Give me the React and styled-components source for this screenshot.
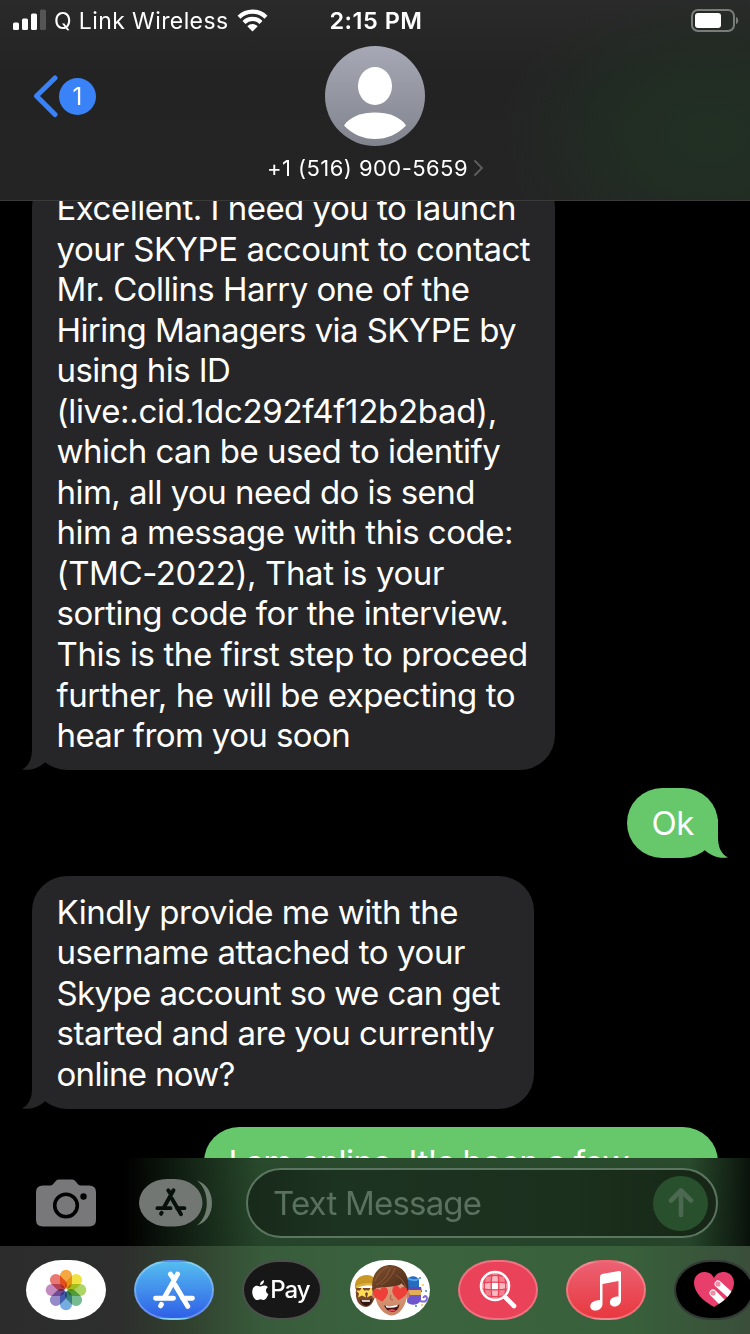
import React from "react";
import styled, { createGlobalStyle } from "styled-components";

const GlobalStyle = createGlobalStyle`
  * { box-sizing: border-box; }
  html, body { margin: 0; padding: 0; background: #000; }
  body { font-family: Inter, "Liberation Sans", sans-serif; color: #fff; overflow: hidden; }
  svg { display: block; flex: none; }
`;

const Screen = styled.main`
  display: flex;
  flex-direction: column;
  width: 750px;
  height: 1334px;
  background: #000;
  overflow: hidden;
`;

const Header = styled.header`
  flex: none;
  height: 201px;
  border-bottom: 1px solid #3a3a3b;
  background:
    radial-gradient(ellipse 210px 150px at 710px 135px, #223024 0%, rgba(33, 46, 35, 0.8) 45%, rgba(34, 36, 34, 0) 100%),
    linear-gradient(#2a2a2a 0, #232323 75px, #242424 100%);
`;

const StatusBar = styled.div`
  display: grid;
  grid-template-columns: 1fr auto 1fr;
  align-items: center;
  height: 40px;
  padding: 0 11px 0 13px;
`;

const Carrier = styled.div`
  display: flex;
  align-items: center;
  font-size: 23px;
  letter-spacing: 0.4px;
  white-space: nowrap;
  span { margin: 1px 8px 0 8px; }
`;

const Clock = styled.time`
  font-size: 23.5px;
  font-weight: 600;
  letter-spacing: 0.5px;
  padding-top: 1px;
`;

const BatterySlot = styled.div`
  justify-self: end;
`;

const ContactBar = styled.div`
  display: grid;
  grid-template-columns: 1fr auto 1fr;
  padding: 6px 33px 0;
`;

const BackButton = styled.div`
  display: flex;
  align-items: center;
  align-self: start;
  gap: 1px;
  height: 100px;
`;

const UnreadBadge = styled.span`
  display: grid;
  place-items: center;
  width: 37px;
  height: 37px;
  border-radius: 50%;
  background: #3a82f7;
  font-size: 24px;
`;

const Contact = styled.div`
  display: flex;
  flex-direction: column;
  align-items: center;
`;

const PhoneNumber = styled.div`
  display: flex;
  align-items: center;
  gap: 6px;
  height: 30px;
  margin-top: 7px;
  font-size: 22px;
  letter-spacing: 0.45px;
  white-space: nowrap;
`;

const Thread = styled.section`
  display: flex;
  flex-direction: column;
  flex: none;
  height: 957px;
  padding: 0 32px;
  overflow: hidden;
`;

const Bubble = styled.article`
  position: relative;
  flex: none;
  align-self: ${(p) => (p.$sent ? "flex-end" : "flex-start")};
  width: ${(p) => p.$width}px;
  margin-top: ${(p) => p.$gap}px;
  padding: 15.4px 0 14px 24.5px;
  border-radius: 35px;
  background: ${(p) => (p.$sent ? "#67c76b" : "#262628")};
`;

const Line = styled.div`
  height: 40.56px;
  line-height: 40.56px;
  font-size: 33px;
  letter-spacing: ${(p) => p.$track}px;
  white-space: nowrap;
`;

const TailShape = styled.svg`
  position: absolute;
  bottom: 0;
  ${(p) => (p.$sent ? "right: -10px; transform: scaleX(-1);" : "left: -10px;")}
`;

const Composer = styled.section`
  display: flex;
  align-items: center;
  flex: none;
  height: 88px;
  padding: 0 32px 0 36px;
  background:
    linear-gradient(90deg, #000 0, #000 125px, rgba(0, 0, 0, 0) 260px, rgba(0, 0, 0, 0) 690px, rgba(0, 0, 0, 0.75) 750px),
    linear-gradient(#294a2c, #254429);
`;

const ComposerIcons = styled.div`
  display: flex;
  gap: 43px;
  width: 210px;
  margin-top: 2px;
`;

const Field = styled.div`
  display: flex;
  align-items: center;
  justify-content: space-between;
  flex: 1;
  height: 70px;
  margin-top: 2px;
  padding: 0 8px 0 25px;
  border: 2px solid #5b7560;
  border-radius: 35px;
  background: linear-gradient(90deg, #182a1a, #1d3321 20%, #1b301d 70%, #172616);
  color: #5b715f;
  font-size: 33px;
  letter-spacing: -0.8px;
`;

const SendButton = styled.div`
  display: grid;
  place-items: center;
  width: 55px;
  height: 55px;
  border-radius: 50%;
  background: #28502c;
`;

const Drawer = styled.nav`
  display: flex;
  align-items: center;
  gap: 28px;
  flex: none;
  height: 88px;
  padding-left: 26px;
  background: linear-gradient(90deg, #2c2c2d 0, #2d2e2d 120px, #31422f 190px, #385c3b 265px, #3b643e 420px, #38603a 630px, #3a4e3a 750px);
`;

const AppTile = styled.div`
  display: grid;
  place-items: center;
  flex: none;
  width: 80px;
  height: 60px;
  border-radius: 36px / 30px;
  border: ${(p) => p.$rim || "0"};
  background: ${(p) => p.$fill};
  overflow: hidden;
`;

const PayMark = styled.div`
  display: flex;
  align-items: center;
  gap: 1px;
  font-size: 24px;
  font-weight: 500;
  letter-spacing: -1px;
  line-height: 30px;
  margin-left: -2px;
`;

const Signal = () => (
  <svg width="33" height="22" viewBox="0 0 33 22">
    <g fill="#fff">
      <rect x="0" y="13.5" width="6" height="7.5" rx="1.5" />
      <rect x="9" y="9.5" width="6" height="11.5" rx="1.5" />
      <rect x="18" y="4.5" width="6" height="16.5" rx="1.5" />
      <rect x="27" y="0.5" width="6" height="20.5" rx="1.5" fill="#555556" />
    </g>
  </svg>
);

const Wifi = () => (
  <svg width="31" height="23" viewBox="0 0 31 23">
    <g fill="none" stroke="#fff" strokeWidth="4.2">
      <path d="M2 8.2A19.2 19.2 0 0 1 29 8.2" />
      <path d="M7 13.4A12 12 0 0 1 24 13.4" />
    </g>
    <path fill="#fff" d="M15.5 22.5 10.3 17.2A7.4 7.4 0 0 1 20.7 17.2Z" />
  </svg>
);

const Battery = () => (
  <svg width="48" height="23" viewBox="0 0 48 23">
    <rect x="1" y="1" width="42" height="21" rx="6" fill="none" stroke="#7a7c7a" strokeWidth="2" />
    <rect x="4" y="4" width="26" height="15" rx="3" fill="#fff" />
    <path d="M45 8C48 9 48 14 45 15Z" fill="#7a7c7a" />
  </svg>
);

const BackChevron = () => (
  <svg width="25" height="43" viewBox="0 0 25 43">
    <path d="M22 3 3.5 21 22 39.5" fill="none" stroke="#3a82f7" strokeWidth="5" strokeLinecap="round" strokeLinejoin="round" />
  </svg>
);

const Avatar = () => (
  <svg width="100" height="100" viewBox="0 0 100 100">
    <defs>
      <linearGradient id="avatar" x2="0" y2="1">
        <stop stopColor="#a6a9b5" />
        <stop offset="1" stopColor="#81838d" />
      </linearGradient>
    </defs>
    <circle cx="50" cy="50" r="50" fill="url(#avatar)" />
    <ellipse cx="50" cy="40" rx="17" ry="19" fill="#fff" />
    <path d="M19 79.5C24 71 37 66.5 50 66.5S76 71 81 79.5C72 88.500 62 93 50 93S28 88.500 19 79.500Z" fill="#fff" />
  </svg>
);

const DetailChevron = () => (
  <svg width="9" height="16" viewBox="0 0 9 16">
    <path d="M1 1 8 8 1 15" fill="none" stroke="#5f5f61" strokeWidth="1.8" strokeLinecap="round" />
  </svg>
);

const Tail = ({ sent }) => (
  <TailShape $sent={sent} width="36" height="41" viewBox="0 -10 36 41">
    <path d="M10 -8V10C10 20 7 27 0 30.500C10 32 18 28 23.500 23L34 -8Z" fill={sent ? "#67c76b" : "#262628"} />
  </TailShape>
);

const Camera = () => (
  <svg width="60" height="48" viewBox="0 0 60 48">
    <path d="M7 6.500H14C16 6.500 17 5.500 18 4 20 1.500 21 .5 23 .5H36C38 .5 39 1.500 41 4 42 5.500 43 6.500 45 6.500H53Q60 6.500 60 13V41Q60 47.500 53 47.500H7Q0 47.500 0 41V13Q0 6.500 7 6.500Z" fill="#78787a" />
    <circle cx="30" cy="26.500" r="11.300" fill="none" stroke="#000" strokeWidth="3.600" />
    <circle cx="47.500" cy="17.500" r="3.200" />
  </svg>
);

const StoreStrokes = ({ color, width }) => (
  <g fill="none" stroke={color} strokeWidth={width} strokeLinecap="round" strokeLinejoin="round">
    <path d="M2.500 26.500H20M29 26.500H38.500" />
    <path d="M17 3 20 7.500M24 3 11 26" />
    <path d="M21.500 13.500 34 34.500" />
    <path d="M8.200 32.600 7.400 34" />
  </g>
);

const AppsPill = () => (
  <svg width="74" height="48" viewBox="0 0 74 48">
    <path d="M57.500 1.500C67 4 73 13 73 24S67 44 57.500 46.500C64 42 67.800 34 67.800 24S64 6 57.500 1.500Z" fill="#6f7c70" />
    <rect width="63.500" height="47.500" rx="28" ry="23.750" fill="#737774" />
    <g transform="translate(16.500 9) scale(.75 .76)"><StoreStrokes color="#07100a" width="5.200" /></g>
  </svg>
);

const SendArrow = () => (
  <svg width="26" height="30" viewBox="0 0 26 30">
    <path d="M13 27V3M3 12.500 13 2.500 23 12.500" fill="none" stroke="#4c6850" strokeWidth="4.600" strokeLinecap="round" strokeLinejoin="round" />
  </svg>
);

const PETALS = ["#f5a130", "#efe033", "#a6d259", "#6bb587", "#6aa5de", "#8a80c2", "#be80ba", "#e96c66"];

const PhotosIcon = () => (
  <svg width="42" height="42" viewBox="-21 -21 42 42">
    {PETALS.map((color, i) => (
      <rect
        key={color}
        x="-6"
        y="-20.300"
        width="12"
        height="19.300"
        rx="6"
        fill={color}
        opacity=".92"
        transform={`rotate(${i * 45})`}
        style={{ mixBlendMode: "multiply" }}
      />
    ))}
    <circle r="1.500" fill="#fff" />
  </svg>
);

const StoreIcon = () => (
  <svg width="42" height="38" viewBox="0 0 41 37">
    <StoreStrokes color="#fff" width="4.800" />
  </svg>
);

const AppleIcon = () => (
  <svg width="17" height="21" viewBox="0 0 17 21">
    <path fill="#fff" d="M12 .3C12.200 2.900 10.300 5 8.100 5 7.900 2.700 9.900.6 12 .3ZM15.800 7.200C13.200 8.800 13.400 12.700 16.400 14 15.500 16.800 13.700 19.800 11.900 20 10.500 20 10 19.200 8.500 19.200S6.400 20 5 20C2.200 19.800-.2 14.900.3 11 .6 8 2.600 5.700 5 5.700 6.500 5.700 7.500 6.500 8.500 6.500 9.600 6.500 11 5.400 12.900 5.600 14.100 5.700 15.100 6.200 15.800 7.200Z" />
  </svg>
);

const Heart = ({ x, y, s = 1, r = 0 }) => (
  <path
    transform={`translate(${x} ${y}) rotate(${r}) scale(${s})`}
    d="M0 7C-7 2-8-1-7-4-6-8-1-7 0-4 1-7 6-8 7-4 8-1 7 2 0 7Z"
    fill="#ee4038"
  />
);

const MemojiIcon = () => (
  <svg width="80" height="60" viewBox="0 0 80 60">
    <defs>
      <linearGradient id="hair" x2="1" y2="1">
        <stop stopColor="#80502f" />
        <stop offset="1" stopColor="#482817" />
      </linearGradient>
      <linearGradient id="skin" x2="0" y2="1">
        <stop stopColor="#dda080" />
        <stop offset="1" stopColor="#c98361" />
      </linearGradient>
    </defs>
    <path d="M6 28C5 40 8 46 16 47 22 46 25 41 26 28Z" fill="#76462c" />
    <path d="M5 29C4 20 9 15 17 15 23 15 27 19 26 27 20 24 11 25 5 29Z" fill="#c99726" />
    <path d="M6 27C12 24 20 23 27 26" fill="none" stroke="#dfb440" strokeWidth="2" />
    <path d="m12 27 2 3.500 4 0-3 3 1 4-4-2-4 2 1-4-3-3 4 0Z" fill="#ffdb53" />
    <path d="m21 27 2 3.500 4 0-3 3 1 4-4-2-4 2 1-4-3-3 4 0Z" fill="#ffdb53" />
    <path d="M10 40Q16 43 22 39Q21 46 16 46Q11 45 10 40Z" fill="#321511" />
    <path d="M12 41H20" stroke="#fff" strokeWidth="1.500" />
    <path d="M57 20C59 15 67 15 69 20V29H57Z" fill="#276bc1" />
    <path d="M57 18Q64 22 69 19" stroke="#55a6e7" strokeWidth="2" fill="none" />
    <path d="M55 27H71L72 32H57Z" fill="#5f45b8" />
    <path d="M58 31H71V40C68 46 60 46 57 42Z" fill="#6e55cd" />
    <path d="M58 30H71V35H60Z" fill="#e4ae58" />
    <path d="M70 41Q77 43 77 38 76 34 73 38" stroke="#8065dc" strokeWidth="2" fill="none" />
    <g fill="#3c82dd"><circle cx="70" cy="18" r="1" /><circle cx="76" cy="31" r="1" /><circle cx="66" cy="46" r="1" /></g>
    <g fill="#f0cb37"><circle cx="73" cy="25" r="1" /><circle cx="72" cy="45" r="1" /></g>
    <ellipse cx="24.500" cy="34" rx="2.500" ry="4.500" fill="#c98361" />
    <ellipse cx="57.500" cy="34" rx="2" ry="4.500" fill="#c98361" />
    <path d="M25.500 24H57V36C56 46 49 55.500 42 55.500 34 55.500 26 46 25.500 36Z" fill="url(#skin)" />
    <path d="M22.500 31C20.500 15 28 5 41 5 54 6 60 16 58 31L56 31C55.500 28 54 25 51.500 23.500 49 26 45 26 42 26.500 36 27 30 27.500 26 28L24.500 33Z" fill="url(#hair)" />
    <path d="M26 25C33 22 38 15 40 8M31 25C38 21 43 15 45 8M46 15C51 18 54 22 56 27M25 21C28 13 33 9 38 7" fill="none" stroke="#9a6540" strokeWidth=".8" />
    <path d="M34 45.500Q42 48 49.500 44.500Q48 52 42 52Q36.500 51 34 45.500Z" fill="#4a1514" />
    <path d="M36 46.500Q42 48 47.500 45.500" stroke="#fff" strokeWidth="1.600" fill="none" />
    <path d="M38 50.500Q42 48 46 50.500Q42 52.500 38 50.500Z" fill="#e4525b" />
    <path d="M41 35Q39 40 43 40" fill="none" stroke="#b66c51" strokeWidth="1.500" />
    <Heart x={31} y={34.5} s={1.03} r={-12} />
    <Heart x={49.5} y={33} s={1.03} r={8} />
  </svg>
);

const ImageSearchIcon = () => (
  <svg width="40" height="42" viewBox="0 0 40 42">
    <defs><clipPath id="globe"><circle cx="17" cy="17" r="12.500" /></clipPath></defs>
    <g clipPath="url(#globe)">
      <rect width="34" height="34" fill="#f38190" />
      <path d="M13.500 0H20.500V13.500H34V20.500H20.500V34H13.500V20.500H0V13.500H13.500Z" fill="#fbb9c0" />
      <rect x="13.500" y="13.500" width="7" height="7" fill="#fff" />
      <g fill="none" stroke="#ea4259" strokeWidth="1.300">
        <path d="M3 14.200Q17 12.200 31 14.200M3 19.800Q17 21.800 31 19.800M5 8Q17 4.500 29 8M5 26Q17 29.500 29 26" />
        <path d="M14.200 3Q12.200 17 14.200 31M19.800 3Q21.800 17 19.800 31M8 5Q4.500 17 8 29M26 5Q29.500 17 26 29" />
      </g>
    </g>
    <circle cx="17" cy="17" r="14" fill="none" stroke="#fff" strokeWidth="2.600" />
    <path d="m28 29 8 8" stroke="#fff" strokeWidth="4.600" strokeLinecap="round" />
  </svg>
);

const MusicIcon = () => (
  <svg width="32" height="41" viewBox="0 0 32 41">
    <path fill="#fff" d="M10 6.500Q10 4.500 12 4L29 1Q31 .600 31 2.500V30C31 34 28 36.500 24.500 36.500 21 36.500 19.500 34 20 31.500 20.500 28 24 26.500 28.500 26.500V11L12.500 14V34C12.500 38 9 40.500 5.500 40.500 2 40.500 0 38.500.3 35.500 1 31.500 5 30.500 10 30Z" />
  </svg>
);

const TouchHeartIcon = () => (
  <svg width="42" height="38" viewBox="0 0 42 38">
    <defs>
      <clipPath id="touch-heart">
        <path d="M21 36C10 30 1 21 1 12 1 5 6 1 11 1 16 1 19 3 21 7 23 3 26 1 31 1 37 1 41 6 41 12 41 21 32 30 21 36Z" />
      </clipPath>
    </defs>
    <g clipPath="url(#touch-heart)">
      <rect width="42" height="38" fill="#e83e6b" />
      <g stroke="#fff" strokeWidth="7" strokeLinecap="round">
        <path d="M25 13 45 31M20 22 36 38" />
      </g>
    </g>
    <g fill="#f58aa4"><circle cx="25" cy="13" r="2.600" /><circle cx="20" cy="22" r="2.600" /></g>
  </svg>
);

const MESSAGES = [
  {
    width: 523,
    gap: -28.4,
    tail: true,
    lines: [
      ["Excellent. I need you to launch", -0.5],
      ["your SKYPE account to contact", -0.45],
      ["Mr. Collins Harry one of the", -0.55],
      ["Hiring Managers via SKYPE by", -0.58],
      ["using his ID", -0.6],
      ["(live:.cid.1dc292f4f12b2bad),", -0.31],
      ["which can be used to identify", -0.53],
      ["him, all you need do is send", -0.53],
      ["him a message with this code:", -0.5],
      ["(TMC-2022), That is your", -0.4],
      ["sorting code for the interview.", -0.46],
      ["This is the first step to proceed", -0.41],
      ["further, he will be expecting to", -0.46],
      ["hear from you soon", -0.6],
    ],
  },
  { sent: true, width: 91, gap: 18.4, tail: true, lines: [["Ok", -0.6]] },
  {
    width: 502,
    gap: 18.4,
    tail: true,
    lines: [
      ["Kindly provide me with the", -0.5],
      ["username attached to your", -0.41],
      ["Skype account so we can get", -0.61],
      ["started and are you currently", -0.47],
      ["online now?", -0.7],
    ],
  },
  { sent: true, width: 514, gap: 18.4, lines: [["I am online. It's been a few", -0.58]] },
];

const RIM = "2px solid rgba(255, 255, 255, 0.25)";

export default function App() {
  return (
    <>
      <GlobalStyle />
      <Screen>
        <Header>
          <StatusBar>
            <Carrier>
              <Signal />
              <span>Q Link Wireless</span>
              <Wifi />
            </Carrier>
            <Clock>2:15 PM</Clock>
            <BatterySlot><Battery /></BatterySlot>
          </StatusBar>
          <ContactBar>
            <BackButton>
              <BackChevron />
              <UnreadBadge>1</UnreadBadge>
            </BackButton>
            <Contact>
              <Avatar />
              <PhoneNumber>
                <span>+1 (516) 900-5659</span>
                <DetailChevron />
              </PhoneNumber>
            </Contact>
          </ContactBar>
        </Header>
        <Thread>
          {MESSAGES.map((m, i) => (
            <Bubble key={i} $sent={m.sent} $width={m.width} $gap={m.gap}>
              {m.tail && <Tail sent={m.sent} />}
              {m.lines.map(([text, track]) => (
                <Line key={text} $track={track}>{text}</Line>
              ))}
            </Bubble>
          ))}
        </Thread>
        <Composer>
          <ComposerIcons>
            <Camera />
            <AppsPill />
          </ComposerIcons>
          <Field>
            <span>Text Message</span>
            <SendButton><SendArrow /></SendButton>
          </Field>
        </Composer>
        <Drawer>
          <AppTile $fill="#fff"><PhotosIcon /></AppTile>
          <AppTile $fill="linear-gradient(#54bdf0, #2f5fe8)" $rim={RIM}><StoreIcon /></AppTile>
          <AppTile $fill="#171717" $rim="2px solid #4a514b">
            <PayMark><AppleIcon />Pay</PayMark>
          </AppTile>
          <AppTile $fill="#fff"><MemojiIcon /></AppTile>
          <AppTile $fill="#ea4259" $rim={RIM}><ImageSearchIcon /></AppTile>
          <AppTile $fill="linear-gradient(#ec6173, #e8383f)" $rim={RIM}><MusicIcon /></AppTile>
          <AppTile $fill="#000" $rim="2px solid #333934"><TouchHeartIcon /></AppTile>
        </Drawer>
      </Screen>
    </>
  );
}
